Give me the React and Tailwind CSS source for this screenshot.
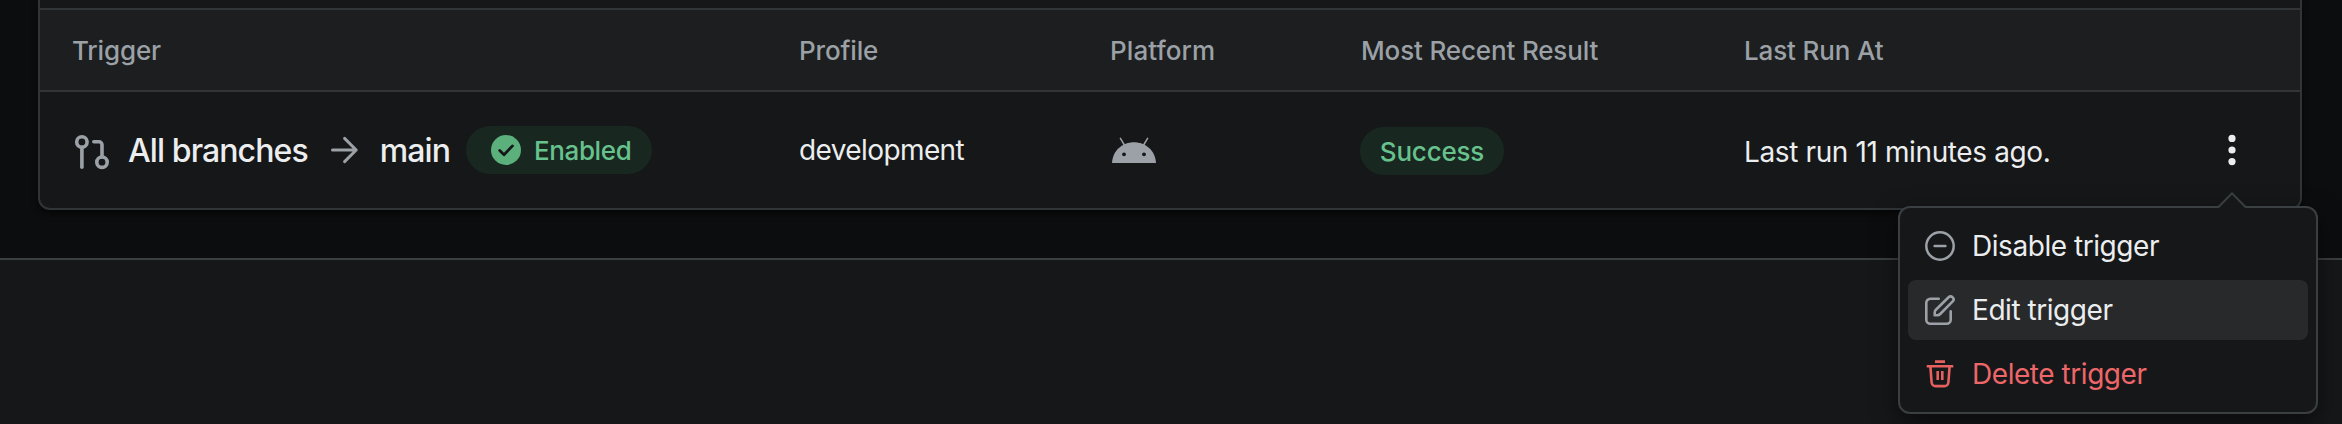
const GitPullRequestIcon = () => (
  <svg className="h-9 w-9 overflow-visible text-[#9BA1A6]" viewBox="0 0 36 36" fill="none" stroke="currentColor" strokeWidth="3.6" strokeLinecap="round" strokeLinejoin="round">
    <circle cx="8.9" cy="10" r="5.2" />
    <path d="M8.9 15.2v20" />
    <circle cx="29" cy="30.2" r="5.2" />
    <path d="M20.8 9.8H26a3 3 0 0 1 3 3v12.2" />
  </svg>
);

const ArrowRightIcon = () => (
  <svg className="h-8 w-8 text-[#9BA1A6]" viewBox="0 0 32 32" fill="none" stroke="currentColor" strokeWidth="3" strokeLinecap="round" strokeLinejoin="round">
    <path d="M4.5 16h23.7M16.6 4.400L28.200 16 16.600 27.600" />
  </svg>
);

const CheckCircleIcon = () => (
  <svg className="h-[30px] w-[30px]" viewBox="0 0 30 30" fill="none">
    <circle cx="15" cy="15" r="15" fill="#5BB07B" />
    <path d="M8.7 15.5l4.3 4.2 8.5-8.8" stroke="#151718" strokeWidth="2.8" strokeLinecap="round" strokeLinejoin="round" />
  </svg>
);

const AndroidIcon = () => (
  <svg className="ml-[2px] h-[26px] w-[44px]" viewBox="0 0 44 26" fill="none">
    <path d="M0 26C.6 13.500 10.500 5.300 22 5.300S43.400 13.500 44 26z" fill="#9BA1A6" />
    <path d="M8.400 1.400l4.300 7.100M35.600 1.400L31.300 8.500" stroke="#9BA1A6" strokeWidth="1.500" strokeLinecap="round" />
    <circle cx="12" cy="17.300" r="1.900" fill="#151718" />
    <circle cx="32" cy="17.300" r="1.900" fill="#151718" />
  </svg>
);

const DotsIcon = () => (
  <svg className="h-8 w-8 text-[#ECEDEE]" viewBox="0 0 32 32" fill="currentColor">
    <circle cx="16" cy="4.400" r="3.600" />
    <circle cx="16" cy="16" r="3.600" />
    <circle cx="16" cy="27.600" r="3.600" />
  </svg>
);

const MinusCircleIcon = () => (
  <svg className="h-8 w-8" viewBox="0 0 32 32" fill="none" stroke="currentColor" strokeWidth="2.500" strokeLinecap="round">
    <circle cx="16" cy="16" r="13.700" />
    <path d="M10.600 16h10.800" />
  </svg>
);

const EditIcon = () => (
  <svg className="h-8 w-8" viewBox="0 0 32 32" fill="none" stroke="currentColor" strokeWidth="2.600" strokeLinecap="round" strokeLinejoin="round">
    <path d="M14.700 4.800H6.300a4 4 0 0 0-4 4v16.900a4 4 0 0 0 4 4h16.400a4 4 0 0 0 4-4v-8.400" />
    <path d="M24.600 3.300a2.900 2.900 0 0 1 4.100 4.100L16.200 20a4 4 0 0 1-2.800 1.200h-2.700v-2.700a4 4 0 0 1 1.200-2.800z" />
  </svg>
);

const TrashIcon = () => (
  <svg className="h-8 w-8" viewBox="0 0 32 32" fill="none" stroke="currentColor" strokeWidth="2.600" strokeLinejoin="round">
    <path d="M2.700 8.300h26.600M11 3.600h10M6.400 8.300l1.200 16a4 4 0 0 0 4 3.800h8.800a4 4 0 0 0 4-3.800l1.200-16M13.700 13v9M18.300 13v9" />
  </svg>
);

const columns = "grid grid-cols-[726px_311px_251px_383px_469px_1fr] pl-[33px]";

const MenuItem = ({ icon, label, className }) => (
  <div className={`flex h-[60px] items-center rounded-lg pl-4 ${className}`}>
    {icon}
    <span className="ml-4 text-[28px] leading-10 tracking-[-0.45px]">{label}</span>
  </div>
);

export default function App() {
  return (
    <div className="relative flex h-[424px] w-[2342px] flex-col overflow-hidden bg-[#0C0D0E] font-[Inter,sans-serif] text-[#ECEDEE]">
      <div className="h-[258px] shrink-0 pr-10 pl-[38px]">
        <div className="h-[210px] overflow-hidden rounded-b-xl border-2 border-t-0 border-[#313538] bg-[#151718] shadow-[0_4px_6px_rgba(0,0,0,0.5)]">
          <div className="h-2" />
          <div className={`${columns} h-[84px] items-center border-y-2 border-[#313538] bg-[#1C1E1F] pt-px text-[26px] font-medium tracking-[-0.15px] text-[#9BA1A6]`}>
            <span className="-ml-px">Trigger</span>
            <span>Profile</span>
            <span className="tracking-[0.1px]">Platform</span>
            <span>Most Recent Result</span>
            <span>Last Run At</span>
          </div>
          <div className={`${columns} h-[116px] items-center text-[28px]`}>
            <div className="flex items-center">
              <GitPullRequestIcon />
              <span className="ml-[19px] pt-[2px] text-[32px] font-medium tracking-[-0.9px]">All branches</span>
              <span className="mx-5"><ArrowRightIcon /></span>
              <span className="pt-[2px] text-[32px] font-medium tracking-[-0.9px]">main</span>
              <span className="ml-4 flex h-12 items-center rounded-full bg-[#182820] pr-[21px] pl-[25px] text-[26px] font-medium text-[#67C28D]">
                <CheckCircleIcon />
                <span className="ml-[13px] tracking-[-0.4px]">Enabled</span>
              </span>
            </div>
            <span className="tracking-[-0.6px]">development</span>
            <AndroidIcon />
            <span className="mt-[2px] -ml-px flex h-12 w-36 items-center justify-center rounded-full bg-[#182820] pt-px text-[26px] font-medium tracking-[-0.2px] text-[#67C28D]">Success</span>
            <span className="pt-1 tracking-[-0.38px]">Last run 11 minutes ago.</span>
            <span className="pl-[3px]"><DotsIcon /></span>
          </div>
        </div>
      </div>
      <div className="grow border-t-2 border-[#3A3F42] bg-[#151718]" />
      <div className="absolute top-[206px] left-[1898px] flex w-[420px] flex-col gap-1 rounded-xl border-2 border-[#3A3F42] bg-[#151718] p-2 shadow-[0_8px_24px_rgba(0,0,0,0.5)]">
        <svg className="absolute -top-4 left-[317px] h-[18px] w-[30px]" viewBox="0 0 30 18" fill="none">
          <path d="M1 16L15 1.400 29 16v2H1z" fill="#151718" />
          <path d="M1 15.500L15 1.400l14 14.100" stroke="#3A3F42" strokeWidth="2" />
        </svg>
        <MenuItem icon={<span className="text-[#9BA1A6]"><MinusCircleIcon /></span>} label="Disable trigger" className="" />
        <MenuItem icon={<span className="text-[#9BA1A6]"><EditIcon /></span>} label="Edit trigger" className="bg-[#28292B]" />
        <MenuItem icon={<span className="text-[#E5605E]"><TrashIcon /></span>} label="Delete trigger" className="text-[#EE6669]" />
      </div>
    </div>
  );
}
